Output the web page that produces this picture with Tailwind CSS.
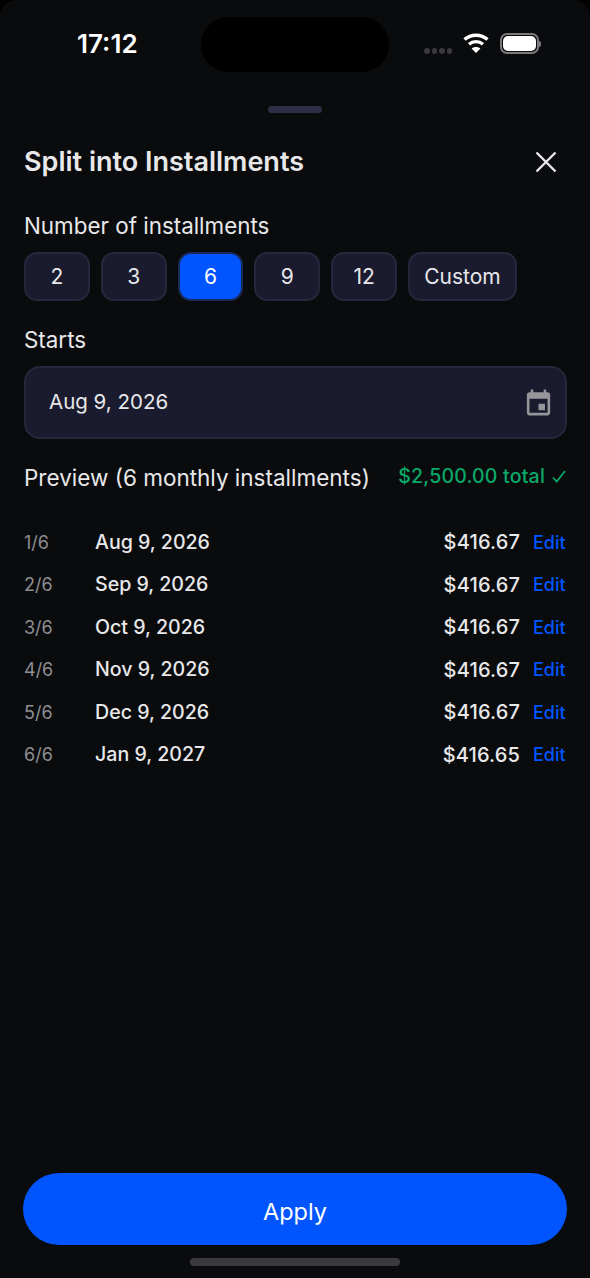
<!DOCTYPE html>
<html lang="en">
<head>
  <meta charset="UTF-8" />
  <meta name="viewport" content="width=device-width, initial-scale=1.0"/>
  <title>Split into Installments</title>
  <script src="https://cdn.jsdelivr.net/npm/@tailwindcss/browser@4"></script>
</head>
<body class="bg-black">
  <div class="relative w-[590px] h-[1278px] overflow-hidden rounded-t-[16px] bg-[#0a0b0d] text-[#e8e8ea] font-['Inter','Liberation_Sans',sans-serif]">

    <!-- Status bar -->
    <div class="h-[88px] flex justify-between items-center pl-[77px] pr-[49px]">
      <span class="text-[26px] font-semibold text-white -mt-[2px]">17:12</span>
      <div class="flex items-center">
        <div class="flex gap-[2px] mt-[14px] mr-[11px]">
          <span class="w-[5.5px] h-[5.5px] rounded-full bg-[#3a3a3e]"></span>
          <span class="w-[5.5px] h-[5.5px] rounded-full bg-[#3a3a3e]"></span>
          <span class="w-[5.5px] h-[5.5px] rounded-full bg-[#3a3a3e]"></span>
          <span class="w-[5.5px] h-[5.5px] rounded-full bg-[#3a3a3e]"></span>
        </div>
        <svg width="26" height="22" viewBox="0 0 26 22" class="mr-[11px] -mt-[2px]" fill="none" stroke="white" stroke-width="3.4">
          <path d="M1.500 7.500C8 1.800 18 1.800 24.500 7.500"/>
          <path d="M6 12.200C10 8.800 16 8.800 20 12.200"/>
          <path d="M13 21L8.600 16.400C11 14.400 15 14.400 17.400 16.400Z" fill="white" stroke="none"/>
        </svg>
        <div class="flex items-center -mt-[1px]">
          <div class="w-[39px] h-[21px] rounded-[7px] border-2 border-[#7a7a7c] p-[1px]">
            <div class="w-full h-full rounded-[5px] bg-white"></div>
          </div>
          <span class="w-[2px] h-[6px] bg-[#7a7a7c] rounded-r-sm"></span>
        </div>
      </div>
    </div>
    <div class="absolute left-[201px] top-[17px] w-[188px] h-[55px] rounded-full bg-black"></div>

    <!-- Sheet -->
    <div class="px-6">
      <div class="mx-auto mt-[18px] w-[54px] h-[7px] rounded-full bg-[#2e2f45]"></div>

      <div class="mt-[31px] h-[36px] flex justify-between items-center">
        <h1 class="text-[27px] font-semibold">Split into Installments</h1>
        <svg width="24" height="24" viewBox="0 0 24 24" class="mr-[8px]" fill="none" stroke="#e8e8ea" stroke-width="2.4">
          <path d="M2.500 2.500L21.500 21.500M21.500 2.500L2.500 21.500"/>
        </svg>
      </div>

      <p class="mt-[31px] h-[30px] leading-[30px] text-[22.400px]">Number of installments</p>
      <div class="mt-[11px] flex gap-[11px] text-[21px]">
        <button class="w-[65.800px] h-[49px] rounded-[13px] bg-[#1a1b2e] border-2 border-[#26273a]">2</button>
        <button class="w-[65.800px] h-[49px] rounded-[13px] bg-[#1a1b2e] border-2 border-[#26273a]">3</button>
        <button class="w-[65.800px] h-[49px] rounded-[13px] bg-[#0055ff] border-2 border-[#1a2a5a] text-white">6</button>
        <button class="w-[65.800px] h-[49px] rounded-[13px] bg-[#1a1b2e] border-2 border-[#26273a]">9</button>
        <button class="w-[65.800px] h-[49px] rounded-[13px] bg-[#1a1b2e] border-2 border-[#26273a]">12</button>
        <button class="w-[109px] h-[49px] rounded-[13px] bg-[#1a1b2e] border-2 border-[#26273a]">Custom</button>
      </div>

      <p class="mt-[24px] h-[30px] leading-[30px] text-[22.400px]">Starts</p>
      <div class="mt-[11px] w-[543px] h-[73px] rounded-[16px] bg-[#1a1b2e] border-2 border-[#26273a] flex justify-between items-center pl-[23px] pr-[11px]">
        <span class="text-[20.500px]">Aug 9, 2026</span>
        <svg width="31" height="31" viewBox="0 0 24 24" fill="#96969a">
          <path d="M19 4h-1V2h-2v2H8V2H6v2H5C3.900 4 3 4.900 3 6v14c0 1.100.9 2 2 2h14c1.100 0 2-.9 2-2V6c0-1.100-.9-2-2-2zm0 16H5V9h14v11zM12 13h5v5h-5z"/>
        </svg>
      </div>

      <div class="mt-[23px] h-[32px] flex justify-between items-center">
        <span class="text-[22.500px]">Preview (6 monthly installments)</span>
        <span class="flex items-center gap-[7px] text-[19.500px] font-medium text-[#0aa868] tracking-[0.2px] -mt-[3px]">$2,500.00 total
          <svg width="14" height="15" viewBox="0 0 15 15" fill="none" stroke="#0aa868" stroke-width="1.800"><path d="M1 8.500L5 13L14 1.500"/></svg>
        </span>
      </div>

      <!-- Rows -->
      <div class="mt-[27px] text-[19.600px] font-medium">
        <div class="h-[42.500px] flex items-center"><span class="w-[71px] text-[18px] font-normal text-[#8e8e93]">1/6</span><span>Aug 9, 2026</span><span class="ml-auto text-[20px] tracking-[0.15px]">$416.67</span><span class="ml-[13px] w-[33px] text-[18px] text-[#0055ff]">Edit</span></div>
        <div class="h-[42.500px] flex items-center"><span class="w-[71px] text-[18px] font-normal text-[#8e8e93]">2/6</span><span>Sep 9, 2026</span><span class="ml-auto text-[20px] tracking-[0.15px]">$416.67</span><span class="ml-[13px] w-[33px] text-[18px] text-[#0055ff]">Edit</span></div>
        <div class="h-[42.500px] flex items-center"><span class="w-[71px] text-[18px] font-normal text-[#8e8e93]">3/6</span><span>Oct 9, 2026</span><span class="ml-auto text-[20px] tracking-[0.15px]">$416.67</span><span class="ml-[13px] w-[33px] text-[18px] text-[#0055ff]">Edit</span></div>
        <div class="h-[42.500px] flex items-center"><span class="w-[71px] text-[18px] font-normal text-[#8e8e93]">4/6</span><span>Nov 9, 2026</span><span class="ml-auto text-[20px] tracking-[0.15px]">$416.67</span><span class="ml-[13px] w-[33px] text-[18px] text-[#0055ff]">Edit</span></div>
        <div class="h-[42.500px] flex items-center"><span class="w-[71px] text-[18px] font-normal text-[#8e8e93]">5/6</span><span>Dec 9, 2026</span><span class="ml-auto text-[20px] tracking-[0.15px]">$416.67</span><span class="ml-[13px] w-[33px] text-[18px] text-[#0055ff]">Edit</span></div>
        <div class="h-[42.500px] flex items-center"><span class="w-[71px] text-[18px] font-normal text-[#8e8e93]">6/6</span><span>Jan 9, 2027</span><span class="ml-auto text-[20px] tracking-[0.15px]">$416.65</span><span class="ml-[13px] w-[33px] text-[18px] text-[#0055ff]">Edit</span></div>
      </div>
    </div>

    <!-- Bottom -->
    <div class="absolute left-[23px] right-[23px] bottom-[33px] h-[72px] pt-[5px] rounded-full bg-[#0055ff] flex items-center justify-center text-[23.500px] text-white">Apply</div>
    <div class="absolute left-[190px] bottom-[12px] w-[210px] h-[8px] rounded-full bg-[#3a3a3c]"></div>
  </div>
</body>
</html>
